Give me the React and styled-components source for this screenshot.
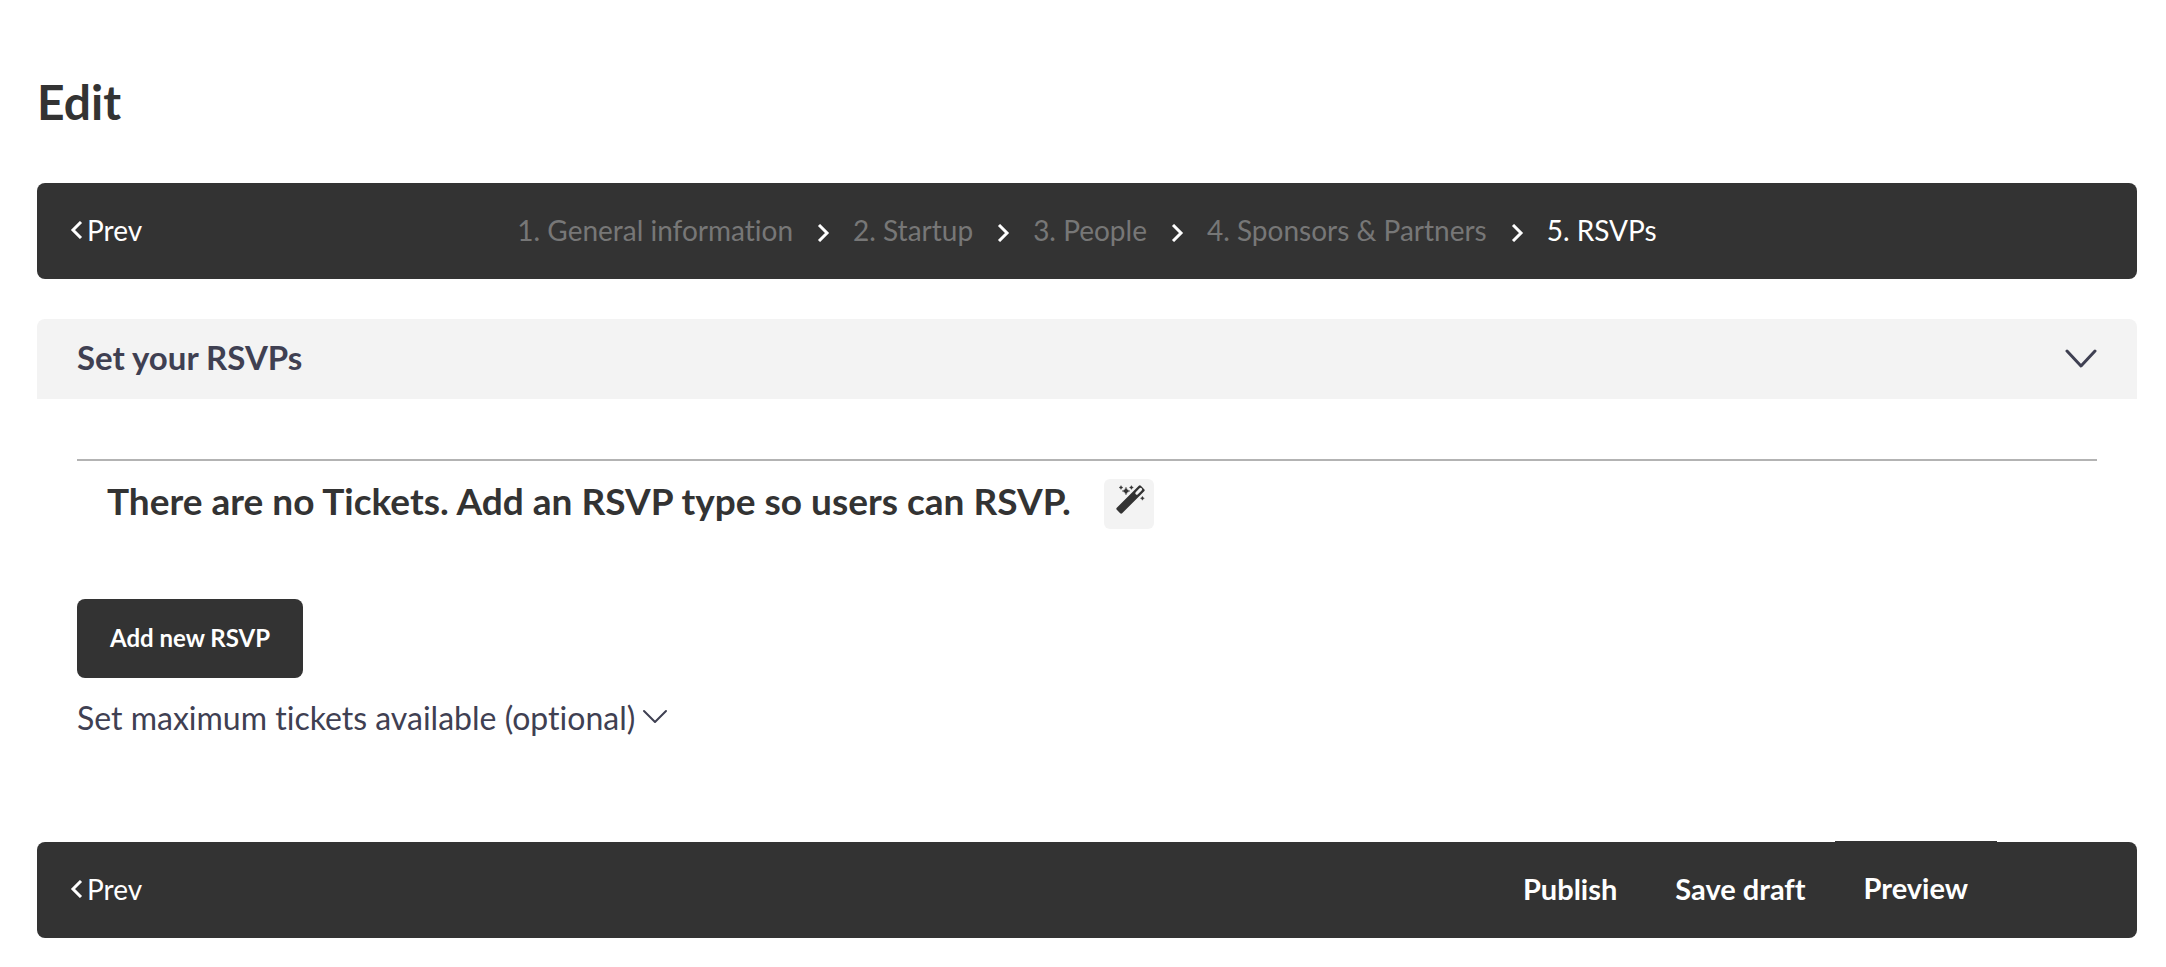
import React from "react";
import styled, { createGlobalStyle } from "styled-components";

const ink = "#333333";
const navy = "#3f4052";

const GlobalStyle = createGlobalStyle`
  * { box-sizing: border-box; }
  body {
    margin: 0;
    background: #fff;
    color: ${ink};
    font-family: Lato, "Liberation Sans", sans-serif;
    font-variant-ligatures: none;
  }
  button {
    border: 0;
    margin: 0;
    padding: 0;
    background: none;
    color: inherit;
    font: inherit;
    font-variant-ligatures: none;
    cursor: pointer;
  }
`;

const Page = styled.main`
  padding: 72px 29px 29px 37px;
`;

const Title = styled.h1`
  margin: 0 0 51px;
  font-size: 48px;
  line-height: 60px;
  font-weight: 700;
`;

const Bar = styled.div`
  display: grid;
  grid-template-columns: 1fr auto 1fr;
  align-items: center;
  height: 96px;
  padding: 0 32px;
  border-radius: 8px;
  background: ${ink};
  color: #fff;
  font-size: 28px;
  line-height: 32px;
`;

const PrevButton = styled.button`
  display: flex;
  align-items: center;
  justify-self: start;
  gap: 4px;
  padding-bottom: 2px;
`;

const Steps = styled.ol`
  display: flex;
  align-items: center;
  gap: 23px;
  margin: 0;
  padding: 0 0 3px;
  list-style: none;
`;

const Step = styled.li`
  display: flex;
  align-items: center;
  gap: 23px;

  svg {
    margin-top: 6px;
  }
`;

const StepLink = styled.a`
  color: ${(p) => (p.$current ? "#fff" : "#777")};
  text-decoration: none;
`;

const Actions = styled.div`
  grid-column: 3;
  display: flex;
  justify-self: end;
  padding-right: 108px;
`;

const ActionButton = styled.button`
  height: 96px;
  padding: 0 29px 3px;
  background: ${ink};
  font-size: 29px;
  font-weight: 700;
  transform: translateY(${(p) => (p.$raised ? "-1px" : "0")});
`;

const Panel = styled.section`
  margin: 40px 0 0;
`;

const PanelHeader = styled.button`
  display: flex;
  align-items: center;
  justify-content: space-between;
  width: 100%;
  height: 80px;
  padding: 0 40px 5px;
  border-radius: 8px 8px 0 0;
  background: #f3f3f3;
  color: ${navy};
  font-size: 33px;
  font-weight: 700;
  line-height: 40px;

  svg {
    margin-top: 4px;
  }
`;

const PanelBody = styled.div`
  padding: 60px 40px 104px;
`;

const EmptyRow = styled.div`
  display: flex;
  align-items: center;
  gap: 33px;
  padding: 18px 30px 0;
  border-top: 2px solid #b3b3b3;
`;

const EmptyText = styled.h2`
  margin: 0;
  padding-bottom: 7px;
  font-size: 37px;
  line-height: 42px;
  font-weight: 700;
`;

const WandButton = styled.button`
  display: flex;
  justify-content: center;
  width: 50px;
  height: 50px;
  padding: 7px 0 0 4px;
  border-radius: 6px;
  background: #f3f3f3;
`;

const AddButton = styled.button`
  display: block;
  height: 79px;
  margin-top: 70px;
  padding: 0 33px 2px;
  border-radius: 8px;
  background: ${ink};
  color: #fff;
  font-size: 24px;
  font-weight: 700;
`;

const LimitToggle = styled.button`
  display: flex;
  align-items: center;
  gap: 7px;
  margin-top: 20px;
  color: ${navy};
  font-size: 32px;
  line-height: 40px;

  svg {
    margin-bottom: 4px;
  }
`;

function StepArrow({ back }) {
  return (
    <svg width="14" height="18" viewBox="0 0 14 18" fill="none" stroke="currentColor" strokeWidth="3" aria-hidden="true">
      <path d={back ? "M12 1 4 9l8 8" : "M3 1l8 8-8 8"} />
    </svg>
  );
}

function Chevron({ width, height, stroke }) {
  return (
    <svg width={width} height={height} viewBox={`0 0 ${width} ${height}`} fill="none" stroke="currentColor" strokeWidth={stroke} strokeLinecap="round" strokeLinejoin="round" aria-hidden="true">
      <path d={`M2 2 ${width / 2} ${height - 2} ${width - 2} 2`} />
    </svg>
  );
}

function WandIcon() {
  return (
    <svg width="28" height="28" viewBox="0 0 28 28" fill="currentColor" overflow="visible" aria-hidden="true">
      <rect x="-17" y="-3.800" width="34" height="7.600" rx="1.400" transform="translate(13.500 13.500) rotate(-45)" />
      <path d="M19.800 7.200 23.600 3.400" stroke="#f3f3f3" strokeWidth="3" strokeLinecap="round" />
      <path d="M9 1q.7 3.300 4 4-3.300.7-4 4-.7-3.300-4-4 3.300-.7 4-4ZM4-.500q.4 1.600 2 2-1.600.4-2 2-.4-1.600-2-2 1.600-.4 2-2ZM14.400-.500q.4 1.600 2 2-1.600.4-2 2-.4-1.600-2-2 1.600-.4 2-2ZM25.400 10.300q.4 1.600 2 2-1.600.4-2 2-.4-1.600-2-2 1.600-.4 2-2Z" stroke="currentColor" strokeWidth=".3" />
    </svg>
  );
}

const steps = [
  "1. General information",
  "2. Startup",
  "3. People",
  "4. Sponsors & Partners",
  "5. RSVPs",
];

function Prev() {
  return (
    <PrevButton type="button">
      <StepArrow back />
      Prev
    </PrevButton>
  );
}

export default function App() {
  return (
    <>
      <GlobalStyle />
      <Page>
        <Title>Edit</Title>
        <Bar as="nav">
          <Prev />
          <Steps>
            {steps.map((label, i) => {
              const last = i === steps.length - 1;
              return (
                <Step key={label}>
                  <StepLink href="#" $current={last}>{label}</StepLink>
                  {!last && <StepArrow />}
                </Step>
              );
            })}
          </Steps>
        </Bar>
        <Panel>
          <PanelHeader type="button">
            Set your RSVPs
            <Chevron width={32} height={19} stroke={3} />
          </PanelHeader>
          <PanelBody>
            <EmptyRow>
              <EmptyText>There are no Tickets. Add an RSVP type so users can RSVP.</EmptyText>
              <WandButton type="button" aria-label="Create tickets automatically">
                <WandIcon />
              </WandButton>
            </EmptyRow>
            <AddButton type="button">Add new RSVP</AddButton>
            <LimitToggle type="button">
              Set maximum tickets available (optional)
              <Chevron width={26} height={15} stroke={2} />
            </LimitToggle>
          </PanelBody>
        </Panel>
        <Bar>
          <Prev />
          <Actions>
            <ActionButton type="button">Publish</ActionButton>
            <ActionButton type="button">Save draft</ActionButton>
            <ActionButton type="button" $raised>Preview</ActionButton>
          </Actions>
        </Bar>
      </Page>
    </>
  );
}
